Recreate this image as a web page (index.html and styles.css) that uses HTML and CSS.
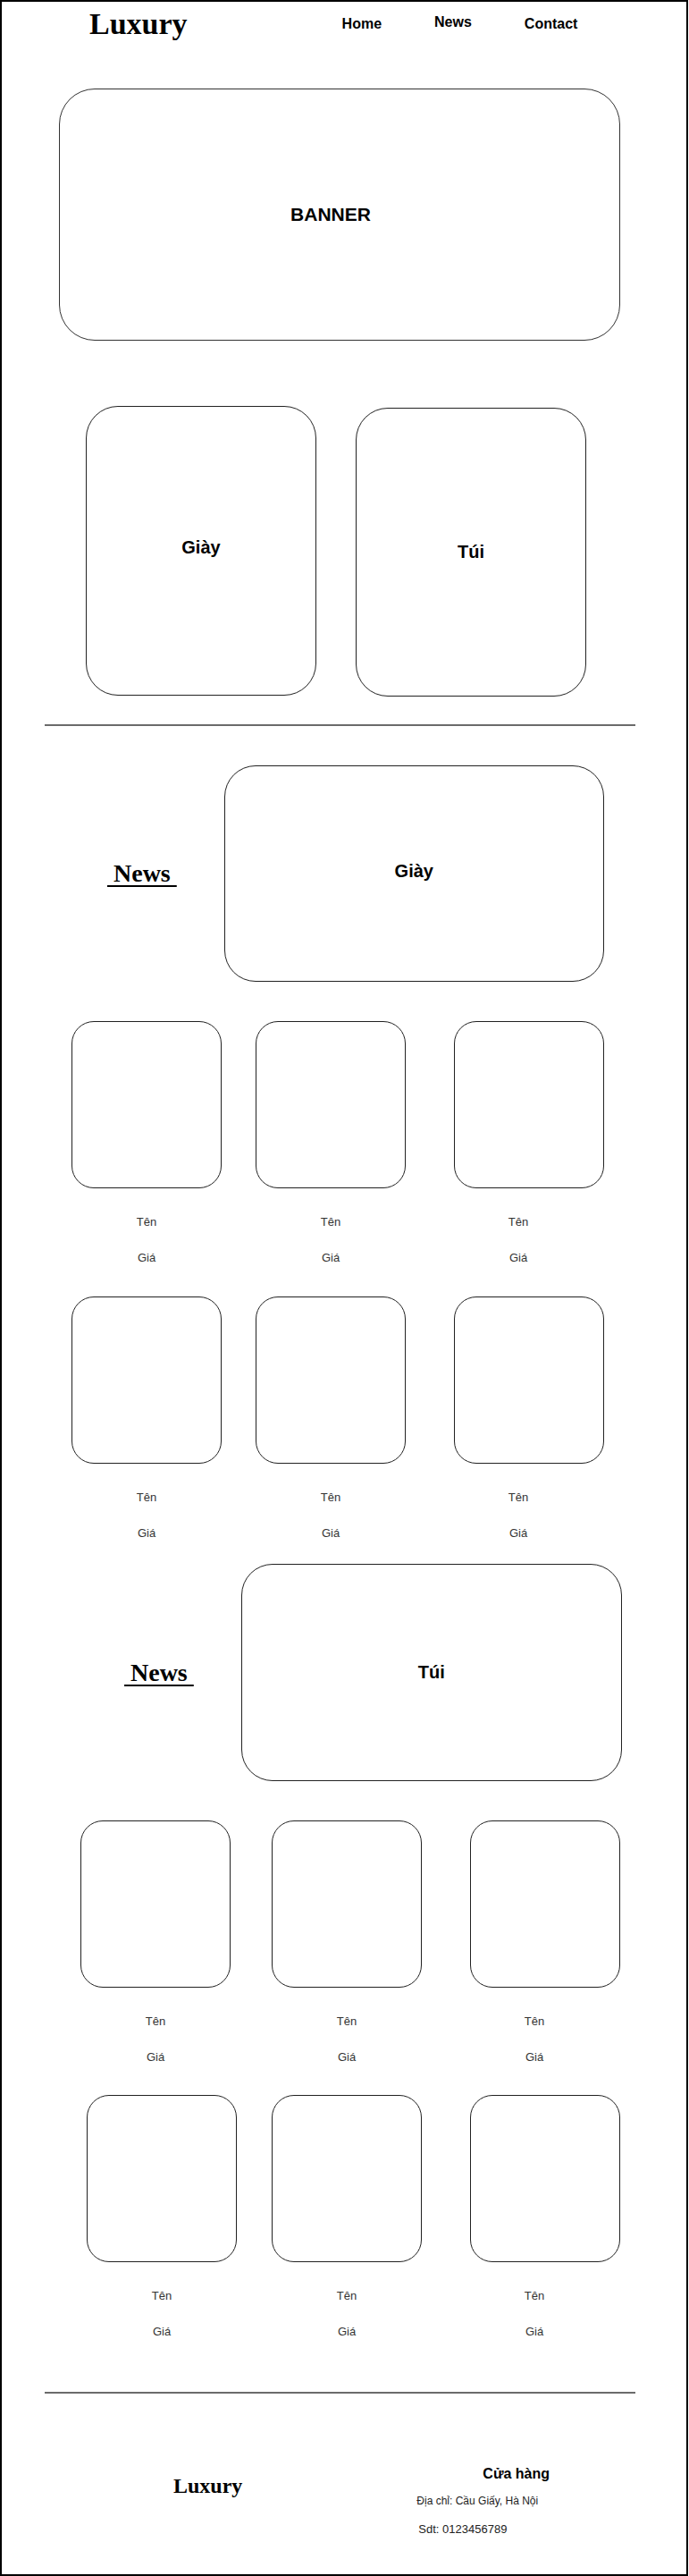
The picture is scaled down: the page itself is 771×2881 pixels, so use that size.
FILE: index.html
```html
<!DOCTYPE html>
<html lang="vi">
<head>
    <meta charset="UTF-8">
    <meta name="viewport" content="width=device-width, initial-scale=1.0">
    <title>Luxury</title>
    <link rel="stylesheet" href="styles.css">
</head>
<body>
    <div class="page">
        <header class="header">
            <div class="logo">Luxury</div>
            <nav class="nav">
                <a href="#">Home</a>
                <a href="#" class="nav-news">News</a>
                <a href="#">Contact</a>
            </nav>
        </header>

        <div class="banner">BANNER</div>

        <!-- Danh muc -->
        <div class="categories">
            <div class="category category-shoe">Giày</div>
            <div class="category category-bag">Túi</div>
        </div>

        <hr class="divider">

        <!-- News: Giay -->
        <section class="feature feature-shoes">
            <h2 class="feature-title">&nbsp;News&nbsp;</h2>
            <div class="feature-card">Giày</div>
        </section>

        <div class="products products-shoes">
            <div class="product-row">
                <div class="product"><div class="product-img"></div><p>Tên</p><p>Giá</p></div>
                <div class="product"><div class="product-img"></div><p>Tên</p><p>Giá</p></div>
                <div class="product product-last"><div class="product-img"></div><p>Tên</p><p>Giá</p></div>
            </div>
            <div class="product-row">
                <div class="product"><div class="product-img"></div><p>Tên</p><p>Giá</p></div>
                <div class="product"><div class="product-img"></div><p>Tên</p><p>Giá</p></div>
                <div class="product product-last"><div class="product-img"></div><p>Tên</p><p>Giá</p></div>
            </div>
        </div>

        <!-- News: Tui -->
        <section class="feature feature-bags">
            <h2 class="feature-title">&nbsp;News&nbsp;</h2>
            <div class="feature-card">Túi</div>
        </section>

        <div class="products products-bags">
            <div class="product-row">
                <div class="product"><div class="product-img"></div><p>Tên</p><p>Giá</p></div>
                <div class="product"><div class="product-img"></div><p>Tên</p><p>Giá</p></div>
                <div class="product product-last"><div class="product-img"></div><p>Tên</p><p>Giá</p></div>
            </div>
            <div class="product-row">
                <div class="product product-indent"><div class="product-img"></div><p>Tên</p><p>Giá</p></div>
                <div class="product"><div class="product-img"></div><p>Tên</p><p>Giá</p></div>
                <div class="product product-last"><div class="product-img"></div><p>Tên</p><p>Giá</p></div>
            </div>
        </div>

        <hr class="divider divider-footer">

        <footer class="footer">
            <div class="footer-logo">Luxury</div>
            <div class="store">
                <h3 class="store-title">Cửa hàng</h3>
                <p class="store-address">Địa chỉ: Cầu Giấy, Hà Nội</p>
                <p class="store-phone">Sdt: 0123456789</p>
            </div>
        </footer>
    </div>
</body>
</html>
```

FILE: styles.css
```css
body {
    margin: 0;
    font-family: "Liberation Sans", Arial, sans-serif;
    background-color: white;
    color: #000;
}
.page {
    box-sizing: border-box;
    width: 770px;
    height: 2881px;
    border: 2px solid #000;
}
/* Header */
.header {
    display: flex;
    align-items: flex-start;
    padding: 5px 0 0 98px;
}
.logo {
    font-family: "Liberation Serif", "Times New Roman", serif;
    font-weight: bold;
    font-size: 34px;
    line-height: 40px;
}
.nav {
    display: flex;
    gap: 59px;
    margin-left: 173px;
}
.nav a {
    margin-top: 10px;
    color: #000;
    text-decoration: none;
    font-weight: bold;
    font-size: 16px;
    line-height: 20px;
}
.nav a.nav-news {
    margin-top: 8px;
}
/* Banner */
.banner {
    box-sizing: border-box;
    width: 628px;
    height: 282px;
    margin: 52px 0 0 64px;
    padding-right: 20px;
    border: 1px solid #333;
    border-radius: 40px;
    display: flex;
    align-items: center;
    justify-content: center;
    font-weight: bold;
    font-size: 21px;
}
/* Categories */
.categories {
    display: flex;
    align-items: flex-start;
    gap: 44px;
    margin-top: 73px;
    padding-left: 94px;
}
.category {
    box-sizing: border-box;
    width: 258px;
    height: 324px;
    border: 1px solid #222;
    border-radius: 36px;
    display: flex;
    align-items: center;
    justify-content: center;
    font-weight: bold;
    font-size: 20px;
}
.category-shoe {
    padding-bottom: 8px;
}
.category-bag {
    height: 323px;
    margin-top: 2px;
}
.divider {
    width: 661px;
    height: 2px;
    margin: 31px 0 0 48px;
    border: none;
    background-color: #6b6b6b;
}
/* News sections */
.feature {
    display: flex;
    align-items: center;
    gap: 53px;
}
.feature-shoes {
    margin-top: 44px;
    padding-left: 118px;
}
.feature-bags {
    margin-top: 14px;
    padding-left: 137px;
}
.feature-title {
    margin: 0;
    font-family: "Liberation Serif", "Times New Roman", serif;
    font-weight: bold;
    font-size: 28px;
    line-height: 34px;
    text-decoration: underline;
    text-decoration-thickness: 2px;
    text-underline-offset: 4px;
}
.feature-card {
    box-sizing: border-box;
    width: 425px;
    height: 242px;
    border: 1px solid #222;
    border-radius: 35px;
    display: flex;
    align-items: center;
    justify-content: center;
    font-weight: bold;
    font-size: 20px;
    padding-bottom: 6px;
}
.feature-bags .feature-card {
    width: 426px;
    height: 243px;
    padding-bottom: 0;
}
/* Products */
.products-shoes {
    margin-top: 44px;
}
.products-bags {
    margin-top: 44px;
}
.product-row {
    display: grid;
    grid-template-columns: 206px 222px 168px;
}
.products-shoes .product-row {
    padding-left: 78px;
}
.products-bags .product-row {
    grid-template-columns: 214px 222px 168px;
    padding-left: 88px;
}
.product-row + .product-row {
    margin-top: 23px;
}
.products-bags .product-row + .product-row {
    margin-top: 22px;
}
.product {
    width: 168px;
}
.product-indent {
    margin-left: 7px;
}
.product-img {
    box-sizing: border-box;
    height: 187px;
    border: 1px solid #222;
    border-radius: 25px;
}
.product p {
    margin: 0;
    font-size: 13px;
    line-height: 40px;
    text-align: center;
    color: #333;
}
.product .product-img + p {
    margin-top: 18px;
}
.product-last p {
    padding-right: 24px;
}
.divider-footer {
    margin-top: 47px;
}
/* Footer */
.footer {
    display: flex;
    align-items: flex-start;
    padding-left: 192px;
}
.footer-logo {
    margin-top: 88px;
    font-family: "Liberation Serif", "Times New Roman", serif;
    font-weight: bold;
    font-size: 24px;
    line-height: 30px;
}
.store {
    margin: 80px 0 0 195px;
}
.store-title {
    margin: 0 0 0 74px;
    font-size: 16px;
    line-height: 20px;
}
.store-address {
    margin: 12px 0 0;
    font-size: 12px;
    line-height: 16px;
    color: #222;
}
.store-phone {
    margin: 16px 0 0 2px;
    font-size: 13px;
    line-height: 16px;
    color: #222;
}
```
